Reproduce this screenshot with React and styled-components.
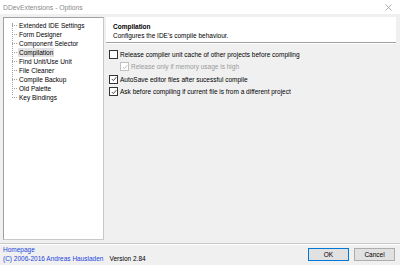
import React from "react";
import styled, { createGlobalStyle } from "styled-components";

const Global = createGlobalStyle`
  html, body { margin: 0; padding: 0; }
  body { width: 400px; height: 265px; overflow: hidden; background: #f0f0f0;
    font-family: "DejaVu Sans", "Liberation Sans", sans-serif; }
`;

const Window = styled.div`
  width: 400px; height: 265px; display: flex; flex-direction: column;
  background: #f0f0f0; color: #000; font-size: 6.5px;
  font-family: "Liberation Sans", sans-serif;
`;

const TitleBar = styled.div`
  height: 14px; background: #fff; display: flex; align-items: center;
  justify-content: space-between; padding: 0 8px 0 3px; color: #8a8a8a;
  font-size: 6.8px; flex-shrink: 0;
`;

const Close = styled.svg`width: 7px; height: 7px;`;

const Main = styled.div`
  flex: 1; display: flex; gap: 2px; padding: 3px 4px 3px 3px; min-height: 0;
`;

const Tree = styled.div`
  width: 101px; background: #fff; border: 1px solid #a0a0a0;
  border-right-color: #c8c8c8; border-bottom-color: #c8c8c8;
  padding: 3px 0 0 8px; box-sizing: border-box; position: relative;
`;

const TreeList = styled.div`
  position: relative; display: flex; flex-direction: column;
  &::before {
    content: ""; position: absolute; left: 0; top: 2px; height: 72px;
    border-left: 1px dotted #a0a0a0;
  }
`;

const TreeItem = styled.div`
  height: 9px; line-height: 9px; display: flex; align-items: center; position: relative;
  padding-left: 6px;
  &::before {
    content: ""; position: absolute; left: 0; top: 4px; width: 5px;
    border-top: 1px dotted #a0a0a0;
  }
`;

const Label = styled.span`
  padding: 0 1px; background: ${p => (p.$sel ? "#e2e2e2" : "transparent")};
  white-space: nowrap;
`;

const Right = styled.div`flex: 1; display: flex; flex-direction: column;`;

const Header = styled.div`
  background: #fff; height: 26px; padding: 6px 0 0 7px; box-sizing: border-box;
  border-bottom: 1px solid #a0a0a0;
  display: flex; flex-direction: column; gap: 1px;
`;

const HeaderTitle = styled.div`font-weight: bold; line-height: 8px;`;
const HeaderSub = styled.div`line-height: 8px;`;

const Options = styled.div`
  display: flex; flex-direction: column; padding: 6px 0 0 3px; gap: 4px;
  border-top: 1px solid #fff;
`;

const Row = styled.label`
  display: flex; align-items: center; gap: 2px; height: 8.5px;
  padding-left: ${p => (p.$indent ? "11px" : "0")};
  color: ${p => (p.$disabled ? "#9a9a9a" : "#000")};
  white-space: nowrap;
`;

const Box = styled.span`
  width: 7px; height: 7px; border: 1px solid ${p => (p.$disabled ? "#c0c0c0" : "#333")};
  background: #fff; display: inline-flex; align-items: center; justify-content: center;
  flex-shrink: 0;
`;

const Footer = styled.div`
  height: 21px; border-top: 1px solid #c8c8c8; display: flex;
  justify-content: space-between; align-items: stretch; padding: 0 5px 0 3px;
  flex-shrink: 0; box-shadow: inset 0 1px 0 #fff;
`;

const Info = styled.div`display: flex; flex-direction: column; line-height: 8.5px; padding-top: 2px;`;
const Link = styled.span`color: #1a45e0;`;
const InfoRow = styled.div`display: flex; gap: 6px;`;

const Buttons = styled.div`display: flex; gap: 5px; align-items: flex-start; padding-top: 4px;`;
const Button = styled.div`
  width: 41px; height: 13px; box-sizing: border-box; background: #e1e1e1;
  border: 1px solid ${p => (p.$default ? "#0078d7" : "#adadad")};
  display: flex; align-items: center; justify-content: center;
`;

const Check = ({ checked, disabled }) => (
  <Box $disabled={disabled}>
    {checked && (
      <svg width="6" height="6" viewBox="0 0 6 6">
        <path d="M0.8 3 L2.4 4.6 L5.3 1.2" fill="none" stroke={disabled ? "#b0b0b0" : "#222"} strokeWidth="0.8" />
      </svg>
    )}
  </Box>
);

const items = [
  "Extended IDE Settings", "Form Designer", "Component Selector", "Compilation",
  "Find Unit/Use Unit", "File Cleaner", "Compile Backup", "Old Palette", "Key Bindings",
];

const options = [
  { text: "Release compiler unit cache of other projects before compiling", checked: false },
  { text: "Release only if memory usage is high", checked: true, disabled: true, indent: true },
  { text: "AutoSave editor files after sucessful compile", checked: true },
  { text: "Ask before compiling if current file is from a different project", checked: true },
];

export default function App() {
  return (
    <Window>
      <Global />
      <TitleBar>
        <span>DDevExtensions - Options</span>
        <Close viewBox="0 0 7 7"><path d="M0.5 0.5 L6.5 6.5 M6.5 0.5 L0.5 6.5" stroke="#999" strokeWidth="0.8" /></Close>
      </TitleBar>
      <Main>
        <Tree>
          <TreeList>
            {items.map(t => (
              <TreeItem key={t}><Label $sel={t === "Compilation"}>{t}</Label></TreeItem>
            ))}
          </TreeList>
        </Tree>
        <Right>
          <Header>
            <HeaderTitle>Compilation</HeaderTitle>
            <HeaderSub>Configures the IDE's compile behaviour.</HeaderSub>
          </Header>
          <Options>
            {options.map(o => (
              <Row key={o.text} $indent={o.indent} $disabled={o.disabled}>
                <Check checked={o.checked} disabled={o.disabled} />
                <span>{o.text}</span>
              </Row>
            ))}
          </Options>
        </Right>
      </Main>
      <Footer>
        <Info>
          <Link>Homepage</Link>
          <InfoRow><Link>(C) 2006-2016 Andreas Hausladen</Link><span>Version 2.84</span></InfoRow>
        </Info>
        <Buttons>
          <Button $default>OK</Button>
          <Button>Cancel</Button>
        </Buttons>
      </Footer>
    </Window>
  );
}
